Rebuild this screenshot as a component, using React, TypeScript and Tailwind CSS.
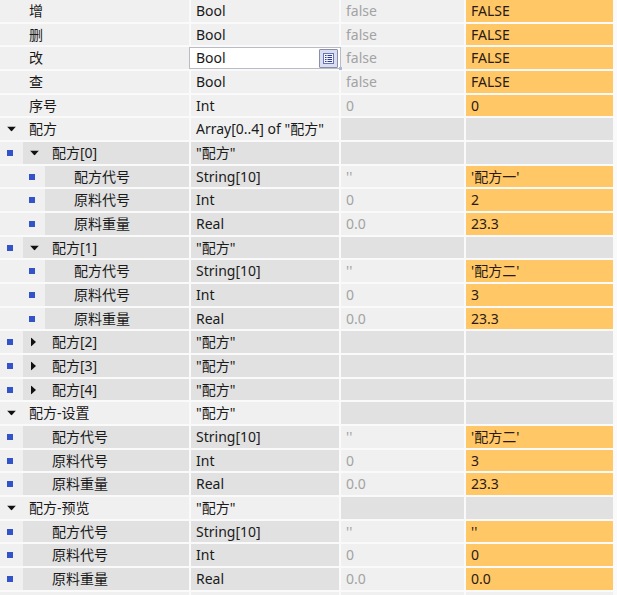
import React from "react";

type Row = {
  name: string;
  level: number;
  type: string;
  start?: string;
  value?: string;
  struct?: "open" | "closed";
  edit?: boolean;
};

const rows: Row[] = [
  { name: "增", level: 0, type: "Bool", start: "false", value: "FALSE" },
  { name: "删", level: 0, type: "Bool", start: "false", value: "FALSE" },
  { name: "改", level: 0, type: "Bool", start: "false", value: "FALSE", edit: true },
  { name: "查", level: 0, type: "Bool", start: "false", value: "FALSE" },
  { name: "序号", level: 0, type: "Int", start: "0", value: "0" },
  { name: "配方", level: 0, type: 'Array[0..4] of "配方"', struct: "open" },
  { name: "配方[0]", level: 1, type: '"配方"', struct: "open" },
  { name: "配方代号", level: 2, type: "String[10]", start: "''", value: "'配方一'" },
  { name: "原料代号", level: 2, type: "Int", start: "0", value: "2" },
  { name: "原料重量", level: 2, type: "Real", start: "0.0", value: "23.3" },
  { name: "配方[1]", level: 1, type: '"配方"', struct: "open" },
  { name: "配方代号", level: 2, type: "String[10]", start: "''", value: "'配方二'" },
  { name: "原料代号", level: 2, type: "Int", start: "0", value: "3" },
  { name: "原料重量", level: 2, type: "Real", start: "0.0", value: "23.3" },
  { name: "配方[2]", level: 1, type: '"配方"', struct: "closed" },
  { name: "配方[3]", level: 1, type: '"配方"', struct: "closed" },
  { name: "配方[4]", level: 1, type: '"配方"', struct: "closed" },
  { name: "配方-设置", level: 0, type: '"配方"', struct: "open" },
  { name: "配方代号", level: 1, type: "String[10]", start: "''", value: "'配方二'" },
  { name: "原料代号", level: 1, type: "Int", start: "0", value: "3" },
  { name: "原料重量", level: 1, type: "Real", start: "0.0", value: "23.3" },
  { name: "配方-预览", level: 0, type: '"配方"', struct: "open" },
  { name: "配方代号", level: 1, type: "String[10]", start: "''", value: "''" },
  { name: "原料代号", level: 1, type: "Int", start: "0", value: "0" },
  { name: "原料重量", level: 1, type: "Real", start: "0.0", value: "0.0" },
];

const LIGHT = "bg-[#f0f0f0]";
const DARK = "bg-[#e1e1e1]";

function Square() {
  return <span className="block w-[6px] h-[6px] bg-[#3354c8]" />;
}

function TriDown() {
  return (
    <svg width="9" height="5" viewBox="0 0 9 5" className="block">
      <polygon points="0,0 9,0 4.5,5" fill="#111" />
    </svg>
  );
}

function TriRight() {
  return (
    <svg width="5" height="9" viewBox="0 0 5 9" className="block">
      <polygon points="0,0 5,4.5 0,9" fill="#111" />
    </svg>
  );
}

function NameContent({ row }: { row: Row }) {
  return (
    <div className="relative flex-1 h-full flex items-center">
      {row.struct && (
        <span className="absolute left-[7px] top-1/2 -translate-y-1/2">
          {row.struct === "open" ? <TriDown /> : <span className="block ml-[1px]"><TriRight /></span>}
        </span>
      )}
      <span className="pl-[29px] text-[#1a1a1a] whitespace-nowrap">{row.name}</span>
    </div>
  );
}

function NameCell({ row }: { row: Row }) {
  if (row.level === 0) {
    return (
      <div className={`w-[189px] h-full flex ${LIGHT}`}>
        <NameContent row={row} />
      </div>
    );
  }
  return (
    <div className={`w-[189px] h-full flex ${LIGHT}`}>
      <div className="h-full flex items-center shrink-0" style={{ width: row.level * 22 + 1 }}>
        <span className="block" style={{ marginLeft: 7 + (row.level - 1) * 22 }}>
          <Square />
        </span>
      </div>
      <div className={`flex-1 h-full flex ${DARK}`}>
        <NameContent row={row} />
      </div>
    </div>
  );
}

function ListIcon() {
  return (
    <svg width="11" height="11" viewBox="0 0 11 11" className="block">
      <rect x="0.5" y="0.5" width="10" height="10" fill="#f4f6ff" stroke="#6a72b8" />
      {[2.5, 4.5, 6.5, 8.5].map((y) => (
        <g key={y}>
          <rect x="2" y={y - 0.5} width="1.5" height="1" fill="#2b3a9a" />
          <rect x="4.5" y={y - 0.5} width="4.5" height="1" fill="#2b3a9a" />
        </g>
      ))}
    </svg>
  );
}

function TypeCell({ row }: { row: Row }) {
  if (row.edit) {
    return (
      <div className="relative w-[152px] -mx-[2px] h-full bg-white border border-[#b9bcc4] flex items-center z-10">
        <span className="pl-[6px] text-[#1a1a1a] flex-1">{row.type}</span>
        <span className="mr-[2px] w-[19px] h-[19px] border border-[#8a8ea8] bg-[#d9def0] flex items-center justify-center rounded-[1px]">
          <ListIcon />
        </span>
        <span className="absolute -right-[2px] -bottom-[2px] w-[3px] h-[3px] bg-[#a9b8d6]" />
      </div>
    );
  }
  const bg = row.level === 0 ? LIGHT : DARK;
  return (
    <div className={`w-[148px] h-full flex items-center ${bg}`}>
      <span className="pl-[5px] text-[#1a1a1a] whitespace-nowrap">{row.type}</span>
    </div>
  );
}

function StartCell({ row }: { row: Row }) {
  const bg = row.struct ? DARK : LIGHT;
  return (
    <div className={`w-[123px] h-full flex items-center ${bg}`}>
      {row.start !== undefined && (
        <span className="pl-[5px] text-[#a3a3a3] whitespace-nowrap">{row.start}</span>
      )}
    </div>
  );
}

function ValueCell({ row }: { row: Row }) {
  const bg = row.struct ? DARK : "bg-[#ffc766]";
  return (
    <div className={`w-[147px] h-full flex items-center ${bg}`}>
      {row.value !== undefined && (
        <span className="pl-[5px] text-[#2a1a14] whitespace-nowrap">{row.value}</span>
      )}
    </div>
  );
}

export default function App() {
  return (
    <div
      className="w-[617px] h-[595px] overflow-hidden bg-[#fafafa] text-[14px] leading-none"
      style={{ fontFamily: '"Noto Sans", "Noto Sans CJK SC", sans-serif' }}
    >
      <div className="flex flex-col gap-[2px]">
        {rows.map((row, i) => (
          <div key={i} className={`${i % 3 === 1 ? "h-[21px]" : "h-[22px]"} flex gap-[2px]`}>
            <NameCell row={row} />
            <TypeCell row={row} />
            <StartCell row={row} />
            <ValueCell row={row} />
          </div>
        ))}
        <div className="h-[22px] flex gap-[2px]">
          <div className={`w-[189px] h-full ${LIGHT}`} />
          <div className={`w-[148px] h-full ${LIGHT}`} />
          <div className={`w-[123px] h-full ${LIGHT}`} />
          <div className={`w-[147px] h-full ${LIGHT}`} />
        </div>
      </div>
    </div>
  );
}
